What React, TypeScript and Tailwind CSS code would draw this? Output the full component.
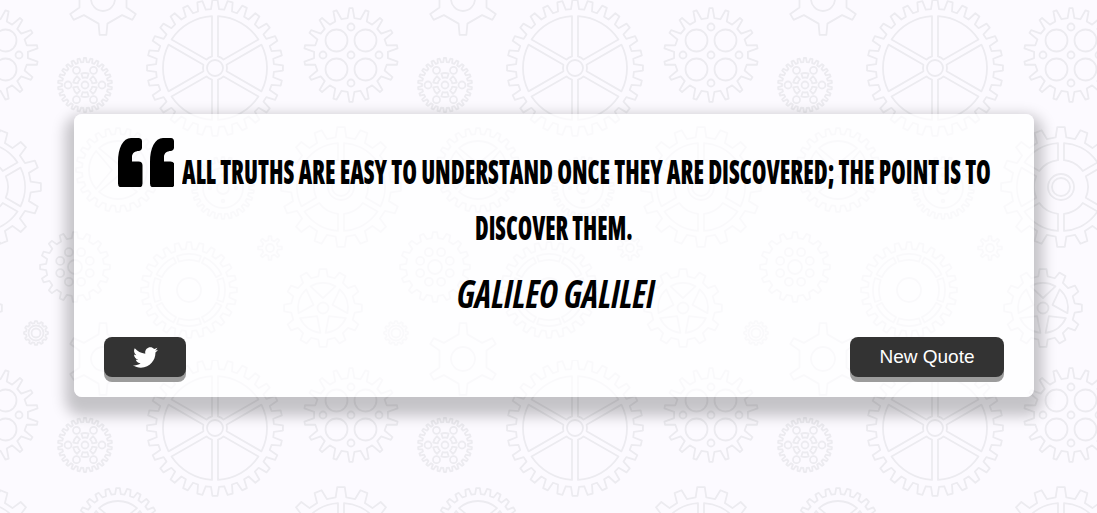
import { FaTwitter } from 'react-icons/fa';

const rad = (deg: number) => (deg * Math.PI) / 180;
const deg = (r: number) => (r * 180) / Math.PI;
const pt = (cx: number, cy: number, r: number, a: number) =>
  `${(cx + r * Math.cos(rad(a))).toFixed(2)} ${(cy + r * Math.sin(rad(a))).toFixed(2)}`;

// toothed outline; the first tooth points straight up
function teeth(cx: number, cy: number, outer: number, root: number, count: number, tip = 0.17, base = 0.3) {
  const step = 360 / count;
  const pts: string[] = [];
  for (let i = 0; i < count; i++) {
    const a = -90 + i * step;
    pts.push(pt(cx, cy, root, a - base * step), pt(cx, cy, outer, a - tip * step), pt(cx, cy, outer, a + tip * step), pt(cx, cy, root, a + base * step));
  }
  return `M${pts.join('L')}Z`;
}

// wedge with a point towards the hub
function wedge(cx: number, cy: number, outer: number, vertex: number, a1: number, a2: number) {
  return `M${pt(cx, cy, vertex, (a1 + a2) / 2)}L${pt(cx, cy, outer, a1)}A${outer} ${outer} 0 0 1 ${pt(cx, cy, outer, a2)}Z`;
}

// block cut out of a ring, its sides parallel to the spokes (half gap g)
function segment(cx: number, cy: number, inner: number, outer: number, a1: number, a2: number, g = 0) {
  const dIn = deg(Math.asin(g / inner));
  const dOut = deg(Math.asin(g / outer));
  return `M${pt(cx, cy, inner, a1 + dIn)}L${pt(cx, cy, outer, a1 + dOut)}A${outer} ${outer} 0 0 1 ${pt(cx, cy, outer, a2 - dOut)}L${pt(cx, cy, inner, a2 - dIn)}A${inner} ${inner} 0 0 0 ${pt(cx, cy, inner, a1 + dIn)}Z`;
}

const around = (count: number, start = -90) => Array.from({ length: count }, (_, i) => start + (i * 360) / count);

function Gears() {
  return (
    <g fill="none" stroke="#ecebf0" strokeWidth="1.8" strokeLinejoin="round">
      {/* big spoked wheel */}
      <path d={teeth(215, 68, 68, 59, 28)} />
      {around(6).map((a) => (
        <path key={a} d={segment(215, 68, 12, 52, a, a + 60, 3)} />
      ))}
      <circle cx="215" cy="68" r="8" />

      {/* four hole gear */}
      <path d={teeth(351, 55, 47, 37, 18, 0.1, 0.26)} />
      {[[-14.5, -14.5], [14.5, -14.5], [-14.5, 14.5], [14.5, 14.5]].map(([x, y]) => (
        <circle key={`${x}${y}`} cx={351 + x} cy={55 + y} r="11" />
      ))}
      {[[0, 0], [0, -28], [0, 28], [-28, 0], [28, 0]].map(([x, y]) => (
        <circle key={`${x}${y}`} cx={351 + x} cy={55 + y} r="3.5" />
      ))}

      {/* small dotted gear */}
      <path d={teeth(85, 85, 27, 23, 26)} />
      <circle cx="85" cy="85" r="3.5" />
      {around(6, 0).map((a) => (
        <circle key={a} cx={85 + 17 * Math.cos(rad(a))} cy={85 + 17 * Math.sin(rad(a))} r="3.5" />
      ))}
      {around(6).map((a) => (
        <path key={a} d={segment(85, 85, 7.5, 12, a - 18, a + 18)} />
      ))}

      {/* six tooth gear */}
      <path d={teeth(103, 359, 36, 25, 6, 0.09, 0.17)} />
      <circle cx="103" cy="359" r="12" />

      {/* gear behind the quote mark */}
      <path d={teeth(118, 170, 42, 36, 24)} />
      {around(4, -135).map((a) => (
        <path key={a} d={wedge(118, 170, 29, 6, a + 4, a + 86)} />
      ))}

      {/* ring gear with dots */}
      <path d={teeth(223, 188, 31, 26, 26)} />
      <circle cx="223" cy="188" r="20" />
      <circle cx="223" cy="188" r="6" />
      {around(4, 0).map((a) => (
        <circle key={a} cx={223 + 13 * Math.cos(rad(a))} cy={188 + 13 * Math.sin(rad(a))} r="1.3" />
      ))}

      {/* large gear with six sectors */}
      <path d={teeth(341, 187, 60, 50, 16, 0.16, 0.27)} />
      {around(6).map((a) => (
        <path key={a} d={segment(341, 187, 27, 44, a, a + 60, 3)} />
      ))}
      <circle cx="341" cy="187" r="13" />
      <circle cx="341" cy="187" r="9" />

      {/* eight hole gear */}
      <path d={teeth(75, 267, 35, 29, 16, 0.15, 0.28)} />
      <circle cx="75" cy="267" r="7" />
      {around(8, -67.5).map((a) => (
        <circle key={a} cx={75 + 16 * Math.cos(rad(a))} cy={267 + 16 * Math.sin(rad(a))} r="4" />
      ))}

      {/* segmented ring gear */}
      <path d={teeth(189, 290, 48, 41, 24)} />
      {around(8, -112.5).map((a) => (
        <path key={a} d={segment(189, 290, 30, 36, a + 3, a + 42)} />
      ))}
      <circle cx="189" cy="290" r="12" />

      {/* tiny gears */}
      <path d={teeth(270, 248, 12, 8, 8, 0.14, 0.26)} />
      <circle cx="270" cy="248" r="4" />
      <path d={teeth(36, 333, 12, 10, 12, 0.16, 0.3)} />
      <circle cx="36" cy="333" r="7.5" />
      <circle cx="36" cy="333" r="4.5" />

      {/* five sector gear */}
      <path d={teeth(323, 308, 39, 32, 12, 0.17, 0.28)} />
      {around(5, -126).map((a) => (
        <path key={a} d={wedge(323, 308, 25, 10, a + 6, a + 66)} />
      ))}
      <circle cx="323" cy="308" r="5.5" />
    </g>
  );
}

function GearBackdrop() {
  return (
    <svg className="absolute inset-0 h-full w-full" aria-hidden="true">
      <defs>
        <pattern id="gears" width="360" height="360" patternUnits="userSpaceOnUse">
          {[[0, 0], [-360, 0], [0, -360], [-360, -360]].map(([x, y]) => (
            <g key={`${x}${y}`} transform={`translate(${x} ${y})`}>
              <Gears />
            </g>
          ))}
        </pattern>
      </defs>
      <rect width="100%" height="100%" fill="url(#gears)" />
    </svg>
  );
}

function QuoteMark() {
  const mark = 'M13 0h8a3.5 3.5 0 0 1 3 3.5v6a3.5 3.5 0 0 1-3 3.5c-4 0-7 2-7 6v4.500h6.500a4 4 0 0 1 4 4v18a4 4 0 0 1-4 4H4a4 4 0 0 1-4-4V24C0 10 5 0 13 0Z';
  return (
    <svg viewBox="0 0 56 49" className="mr-2 -mt-5 h-[49px] w-[56px] shrink-0" aria-hidden="true">
      <path d={mark} />
      <path d={mark} transform="translate(32 0)" />
    </svg>
  );
}

export default function App() {
  return (
    <div className="relative h-[513px] overflow-hidden bg-[#fcfaff] [font-family:'Liberation_Sans',Arial,sans-serif]">
      <GearBackdrop />
      <div className="relative ml-[74px] mt-[114px] flex h-[283px] w-[960px] flex-col rounded-lg bg-white/70 px-[30px] pb-5 pt-[30px] shadow-[0_10px_14px_9px_rgba(0,0,0,0.22)]">
        <div className="flex h-14 items-center justify-center">
          <QuoteMark />
          <span className="h-10 w-[808px] shrink-0">
            <span className="block origin-left scale-x-[.72] whitespace-nowrap text-[33px] font-black leading-10 text-black [font-family:'Open_Sans',sans-serif] [font-stretch:75%]">
              ALL TRUTHS ARE EASY TO UNDERSTAND ONCE THEY ARE DISCOVERED; THE POINT IS TO
            </span>
          </span>
        </div>
        <div className="flex h-14 items-center justify-center">
          <span className="h-10 w-[158px] shrink-0">
            <span className="block origin-left scale-x-[.705] whitespace-nowrap text-[33px] font-black leading-10 text-black [font-family:'Open_Sans',sans-serif] [font-stretch:75%]">
              DISCOVER THEM.
            </span>
          </span>
        </div>
        <div className="mt-[19px] flex h-10 items-center justify-center">
          <span className="h-10 w-[194px] shrink-0">
            <span className="block origin-left scale-x-[.87] whitespace-nowrap text-[40px] font-bold italic leading-[36px] text-black [font-family:'Open_Sans',sans-serif] [font-stretch:75%]">
              GALILEO GALILEI
            </span>
          </span>
        </div>
        <div className="mt-auto flex items-center justify-between">
          <button className="flex h-10 w-[82px] items-center justify-center rounded-lg bg-[#333] text-white shadow-[0_5px_0_#9c9c9c]">
            <FaTwitter size={25} />
          </button>
          <button className="h-10 w-[154px] rounded-lg bg-[#333] text-[19px] text-white shadow-[0_5px_0_#9c9c9c]">
            New Quote
          </button>
        </div>
      </div>
    </div>
  );
}
